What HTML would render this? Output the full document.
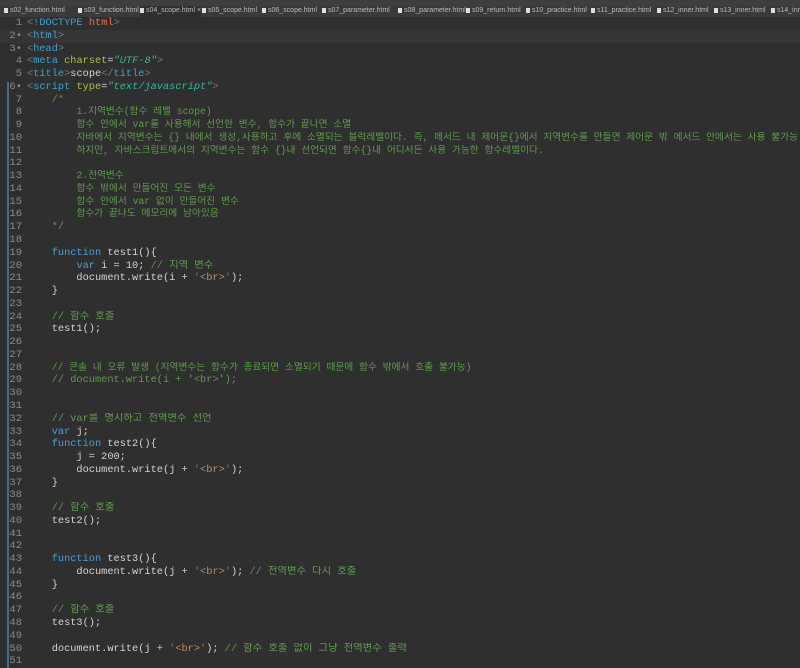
<!DOCTYPE html>
<html><head><meta charset="UTF-8"><style>
body{margin:0;width:800px;height:668px;background:#2f2f2f;overflow:hidden;font-family:"Liberation Mono","Noto Sans CJK KR",monospace;}
#tb{position:absolute;left:0;top:0;width:800px;height:6px;background:#3c3f41;}
#tabs{position:absolute;left:0;top:6px;width:800px;height:11px;background:#3a3a3a;font:7px "Liberation Sans",sans-serif;color:#bbb;white-space:nowrap;overflow:hidden}
#tabs span{position:absolute;top:1px}
#tabs span:before{content:"";display:inline-block;width:4px;height:5px;background:#ddd;margin-right:2px;vertical-align:-1px}
#tabs .a{background:#2f2f2f;height:10px;top:0;padding-top:1px;border-bottom:1px solid #4a88c7}
#g{position:absolute;left:7px;top:82px;width:2px;height:586px;background:#3f6e8f}
#code{position:absolute;left:0;top:17px;width:800px;overflow:hidden}
.l{height:12.78px;line-height:12.78px;font-size:10.3px;white-space:pre;color:#d4d4d4;position:relative;overflow:hidden}
.l.h{background:#353535}
.n{display:inline-block;width:22px;text-align:right;color:#8a8a8a;margin-right:5px;font-size:10.5px}
.c{color:#5f9a4e}.k{color:#4a9fd8}.t{color:#3aa3d1}.o{color:#e0705a}.g{color:#7c7c7c}.at{color:#a7c240}.s{color:#34b89c;font-style:italic}.q{color:#c58a5a}
.kr{font-size:9.7px}
</style></head><body>
<div id="tb"></div>
<div id="tabs">
<span style="left:4px">s02_function.html</span>
<span style="left:78px">s03_function.html</span>
<span class="a" style="left:140px">s04_scope.html ×</span>
<span style="left:202px">s05_scope.html</span>
<span style="left:262px">s06_scope.html</span>
<span style="left:322px">s07_parameter.html</span>
<span style="left:398px">s08_parameter.html</span>
<span style="left:466px">s09_return.html</span>
<span style="left:526px">s10_practice.html</span>
<span style="left:591px">s11_practice.html</span>
<span style="left:657px">s12_inner.html</span>
<span style="left:714px">s13_inner.html</span>
<span style="left:771px">s14_inner</span>
</div>
<div id="g"></div>
<div id="code">
<div class="l"><span class="n">1</span><span class="g">&lt;!</span><span class="t">DOCTYPE</span> <span class="o">html</span><span class="g">&gt;</span></div>
<div class="l h"><span class="n">2•</span><span class="g">&lt;</span><span class="t">html</span><span class="g">&gt;</span></div>
<div class="l"><span class="n">3•</span><span class="g">&lt;</span><span class="t">head</span><span class="g">&gt;</span></div>
<div class="l"><span class="n">4</span><span class="g">&lt;</span><span class="t">meta</span> <span class="at">charset</span>=<span class="s">"UTF-8"</span><span class="g">&gt;</span></div>
<div class="l"><span class="n">5</span><span class="g">&lt;</span><span class="t">title</span><span class="g">&gt;</span>scope<span class="g">&lt;/</span><span class="t">title</span><span class="g">&gt;</span></div>
<div class="l"><span class="n">6•</span><span class="g">&lt;</span><span class="t">script</span> <span class="at">type</span>=<span class="s">"text/javascript"</span><span class="g">&gt;</span></div>
<div class="l"><span class="n">7</span><span class="c">    /*</span></div>
<div class="l"><span class="n">8</span>        <span class="c kr">1.지역변수(함수 레벨 scope)</span></div>
<div class="l"><span class="n">9</span>        <span class="c kr">함수 안에서 var를 사용해서 선언한 변수, 함수가 끝나면 소멸</span></div>
<div class="l"><span class="n">10</span>        <span class="c kr">자바에서 지역변수는 {} 내에서 생성,사용하고 후에 소멸되는 블럭레벨이다. 즉, 메서드 내 제어문{}에서 지역변수를 만들면 제어문 밖 메서드 안에서는 사용 불가능.</span></div>
<div class="l"><span class="n">11</span>        <span class="c kr">하지만, 자바스크립트에서의 지역변수는 함수 {}내 선언되면 함수{}내 어디서든 사용 가능한 함수레벨이다.</span></div>
<div class="l"><span class="n">12</span></div>
<div class="l"><span class="n">13</span>        <span class="c kr">2.전역변수</span></div>
<div class="l"><span class="n">14</span>        <span class="c kr">함수 밖에서 만들어진 모든 변수</span></div>
<div class="l"><span class="n">15</span>        <span class="c kr">함수 안에서 var 없이 만들어진 변수</span></div>
<div class="l"><span class="n">16</span>        <span class="c kr">함수가 끝나도 메모리에 남아있음</span></div>
<div class="l"><span class="n">17</span><span class="c">    */</span></div>
<div class="l"><span class="n">18</span></div>
<div class="l"><span class="n">19</span>    <span class="k">function</span> test1(){</div>
<div class="l"><span class="n">20</span>        <span class="k">var</span> i = 10; <span class="c">// 지역 변수</span></div>
<div class="l"><span class="n">21</span>        document.write(i + <span class="g">'</span><span class="q">&lt;br&gt;</span><span class="g">'</span>);</div>
<div class="l"><span class="n">22</span>    }</div>
<div class="l"><span class="n">23</span></div>
<div class="l"><span class="n">24</span>    <span class="c">// 함수 호출</span></div>
<div class="l"><span class="n">25</span>    test1();</div>
<div class="l"><span class="n">26</span></div>
<div class="l"><span class="n">27</span></div>
<div class="l"><span class="n">28</span>    <span class="c kr">// 콘솔 내 오류 발생 (지역변수는 함수가 종료되면 소멸되기 때문에 함수 밖에서 호출 불가능)</span></div>
<div class="l"><span class="n">29</span>    <span class="c">// document.write(i + '&lt;br&gt;');</span></div>
<div class="l"><span class="n">30</span></div>
<div class="l"><span class="n">31</span></div>
<div class="l"><span class="n">32</span>    <span class="c">// var를 명시하고 전역변수 선언</span></div>
<div class="l"><span class="n">33</span>    <span class="k">var</span> j;</div>
<div class="l"><span class="n">34</span>    <span class="k">function</span> test2(){</div>
<div class="l"><span class="n">35</span>        j = 200;</div>
<div class="l"><span class="n">36</span>        document.write(j + <span class="g">'</span><span class="q">&lt;br&gt;</span><span class="g">'</span>);</div>
<div class="l"><span class="n">37</span>    }</div>
<div class="l"><span class="n">38</span></div>
<div class="l"><span class="n">39</span>    <span class="c">// 함수 호출</span></div>
<div class="l"><span class="n">40</span>    test2();</div>
<div class="l"><span class="n">41</span></div>
<div class="l"><span class="n">42</span></div>
<div class="l"><span class="n">43</span>    <span class="k">function</span> test3(){</div>
<div class="l"><span class="n">44</span>        document.write(j + <span class="g">'</span><span class="q">&lt;br&gt;</span><span class="g">'</span>); <span class="c">// 전역변수 다시 호출</span></div>
<div class="l"><span class="n">45</span>    }</div>
<div class="l"><span class="n">46</span></div>
<div class="l"><span class="n">47</span>    <span class="c">// 함수 호출</span></div>
<div class="l"><span class="n">48</span>    test3();</div>
<div class="l"><span class="n">49</span></div>
<div class="l"><span class="n">50</span>    document.write(j + <span class="g">'</span><span class="q">&lt;br&gt;</span><span class="g">'</span>); <span class="c">// 함수 호출 없이 그냥 전역변수 출력</span></div>
<div class="l"><span class="n">51</span></div>
</div>
</body></html>
